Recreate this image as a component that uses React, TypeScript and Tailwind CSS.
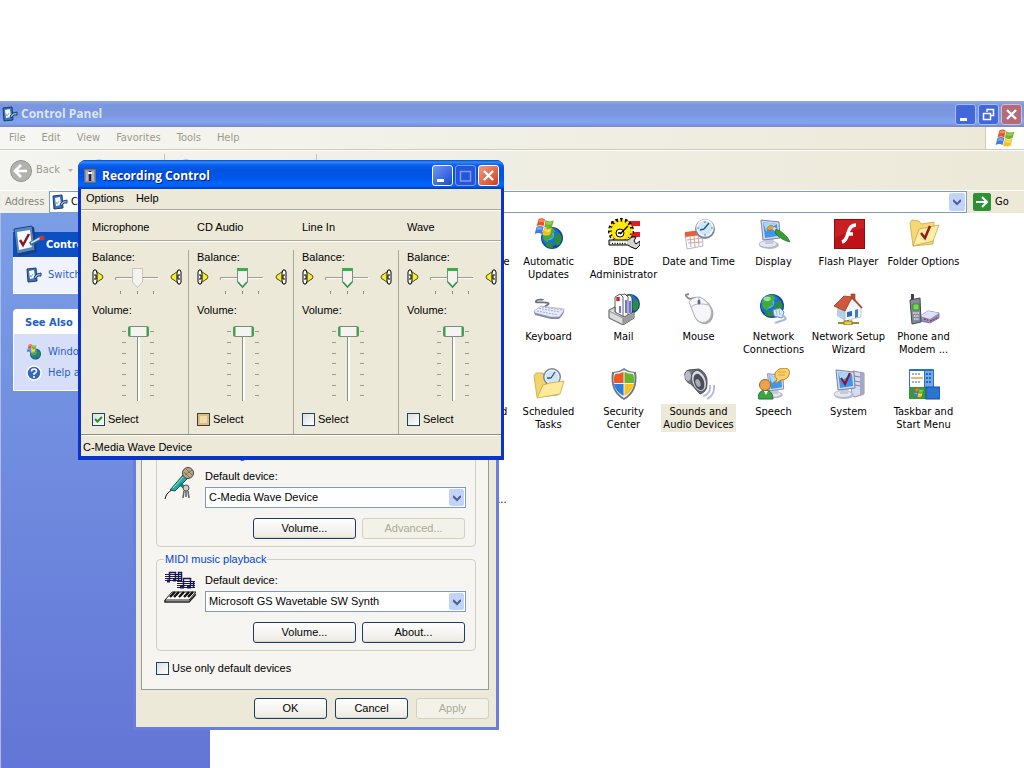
import { useState } from "react";
import type { ReactNode } from "react";
import clsx from "clsx";

/* ---------- Icons ---------- */

const Flag = () => (
  <>
    <path d="M7 2Q12 -1 17 2L15 13Q9 10 4 13Z" fill="#e8542a" />
    <path d="M8 3Q12 1 16 3L15 7Q11 5 7 7Z" fill="#f58a5e" />
    <path d="M18 3Q24 7 31 4L28 14Q22 17 16 14Z" fill="#6fb52c" />
    <path d="M19 5Q24 8 29 6L28 9Q23 12 18 9Z" fill="#94d04c" />
    <path d="M4 14Q9 11 15 14L12 25Q7 22 1 25Z" fill="#3f7be0" />
    <path d="M5 15Q9 13 13 15L12 19Q8 17 4 19Z" fill="#76a8f3" />
    <path d="M16 15Q22 18 28 15L25 26Q19 29 13 26Z" fill="#f8bd1c" />
    <path d="M17 17Q22 19 26 17L25 21Q20 23 16 20Z" fill="#fddc62" />
  </>
);

const Globe = ({ cx, cy, r }: { cx: number; cy: number; r: number }) => (
  <g transform={`translate(${cx} ${cy}) scale(${r / 10})`}>
    <circle r="10" fill="#10489e" />
    <circle cx="-1" cy="-1" r="8.5" fill="#1e6fd0" />
    <circle cx="-3" cy="-3" r="5" fill="#5aaaf0" />
    <path d="M-8-5Q-4-10 1-9L3-6L0-4L1-1L-3 1L-4 4L-8 1Z" fill="#3fae38" />
    <path d="M3-2L7-5L9 0L7 6L4 7L2 3Z" fill="#2b8f35" />
    <path d="M-5 5L0 4L1 9Q-3 9-6 7Z" fill="#2b8f35" />
    <ellipse cx="-4" cy="-6" rx="3" ry="2" fill="#c6f0c8" opacity="0.7" />
  </g>
);

const Monitor = () => (
  <>
    <ellipse cx="11" cy="27" rx="10" ry="4" fill="#b9bdcf" />
    <ellipse cx="10" cy="26" rx="9" ry="3.5" fill="#e4e6f0" stroke="#a0a5ba" strokeWidth="0.6" />
    <path d="M8 20L16 21L15 26L7 26Z" fill="#c5c9da" />
    <path d="M3 2L21 4L22 20L5 22Z" fill="#d6dbea" stroke="#7881a3" />
    <path d="M5 4L19 6L20 18L7 20Z" fill="#3f95ec" />
    <path d="M5 4L19 6L8 13Z" fill="#a6d6fb" />
  </>
);

const PanelIcon = ({ className }: { className: string }) => (
  <svg className={className} viewBox="0 0 32 32">
    <path d="M3 5L21 2L24 27L6 31Z" fill="#173f7a" />
    <path d="M1 4L19 1L22 25L4 29Z" fill="#5587c6" stroke="#1d4480" />
    <path d="M4 7L17 5L19 22L6 25Z" fill="#fbfdff" />
    <path d="M7 15L10 20L16 9" fill="none" stroke="#8d1521" strokeWidth="2.5" />
    <path d="M17 19L28 13" stroke="#35629c" strokeWidth="4" />
    <path d="M18 18L27 13" stroke="#c5ddf5" strokeWidth="2" />
    <circle cx="29" cy="13" r="2.5" fill="#c83a2b" />
  </svg>
);

// 16px variant with a thick pointer and no check mark
const SmallPanelIcon = () => (
  <svg className="size-4 shrink-0" viewBox="0 0 16 16">
    <path d="M1 2L10 1L11 14L2 15Z" fill="#3c74b8" stroke="#163c72" />
    <path d="M3 4L8 3L9 11L4 12Z" fill="#f6faff" />
    <path d="M4 8L5 10L7 7" fill="none" stroke="#8aa9b8" />
    <path d="M8 10L11 7L15 6V9L12 9L9 12Z" fill="#8fb7e2" stroke="#1b3f6f" />
  </svg>
);

const icons: Record<string, ReactNode> = {
  updates: (
    <>
      <Globe cx={19} cy={20} r={11} />
      <g transform="translate(1 0) scale(0.64)"><Flag /></g>
    </>
  ),
  bde: (
    <>
      <path d="M3 3H32V8H3ZM3 14H32V19H3Z" fill="#e01c24" />
      <circle cx="13" cy="13" r="11" fill="none" stroke="#000" strokeWidth="4" strokeDasharray="2.6 2" />
      <circle cx="13" cy="13" r="10" fill="#ffe815" stroke="#000" strokeWidth="0.8" />
      <circle cx="13" cy="13" r="10.500" fill="none" stroke="#ffe815" strokeWidth="2.6" strokeDasharray="2.6 1.6" />
      <circle cx="12" cy="15" r="4" fill="#fff" stroke="#000" />
      <path d="M12 16L20 8M10 15H14" stroke="#000" strokeWidth="1.3" />
      <path d="M1 22H20L24 19L28 19L26 23L28 26L32 23V27L28 31L23 29L20 27H1Z" fill="#d4d4d4" stroke="#000" />
      <path d="M3 24.5H19" stroke="#fff" strokeWidth="2" />
      <path d="M4 25.5H19" stroke="#000" strokeWidth="1.5" strokeDasharray="1 1.5" />
    </>
  ),
  date: (
    <>
      <path d="M2 15L19 13L20 28L4 31Z" fill="#fff" stroke="#b3b7cb" />
      <path d="M2 14L19 12V17L2 19Z" fill="#e2603a" />
      <path d="M4 22L19 20M5 25L19 24M7 18L8 29M11 18L12 29M15 17L16 28" stroke="#d3a79b" />
      <circle cx="22" cy="11" r="10" fill="#7d8799" />
      <circle cx="22" cy="10" r="8" fill="#cfe6f7" stroke="#f9fbff" strokeWidth="1.5" />
      <path d="M21 11L26 5M21 11L17 12" stroke="#29558c" strokeWidth="1.5" />
      <path d="M22 3V5M22 16V18M14 10H16M28 10H30" stroke="#587a9b" />
    </>
  ),
  display: (
    <>
      <Monitor />
      <path d="M9 10Q13 5 16 9Q14 13 9 12Z" fill="#e0a23c" stroke="#9c6a25" strokeWidth="0.6" />
      <path d="M15 10L20 13" stroke="#e6d9b8" strokeWidth="3" />
      <path d="M18 11Q28 15 32 24Q23 22 17 15Z" fill="#35a02f" stroke="#1c6824" strokeWidth="0.7" />
    </>
  ),
  flash: (
    <>
      <rect x="1" y="1" width="31" height="30" fill="#8a1010" />
      <rect x="2" y="2" width="29" height="28" fill="#be1217" />
      <path d="M2 2H31V10Q16 12 2 20Z" fill="#d02a28" opacity="0.6" />
      <path d="M23 7Q17 7 15 15Q13 23 9 24M15 16H20" fill="none" stroke="#fff" strokeWidth="3.5" />
    </>
  ),
  folderOptions: (
    <>
      <path d="M2 5L4 2L11 3L13 6L26 4L25 26L5 28Z" fill="#f5d878" stroke="#c9a548" strokeWidth="0.8" />
      <path d="M5 28L11 11L31 7L25 23Z" fill="#fdeea6" stroke="#c9a548" strokeWidth="0.8" />
      <path d="M13 15L17 20L22 8" fill="none" stroke="#951b1b" strokeWidth="2.5" />
    </>
  ),
  keyboard: (
    <>
      <path d="M14 15C8 13 18 12 15 10S1 11 3 8S10 8 10 6" fill="none" stroke="#6b7080" strokeWidth="1.8" />
      <path d="M1 19L8 14L31 17Q32 20 26 26L18 26L2 22Z" fill="#8588ae" />
      <path d="M1 18L8 13L31 16Q31 19 26 24L18 24L2 20Z" fill="#e9ebf8" stroke="#9699b8" strokeWidth="0.6" />
      <path d="M6 15.500L27 19M9 14L29 17M4 18L25 22" stroke="#a6abd6" strokeDasharray="2 1" />
    </>
  ),
  mail: (
    <>
      <Globe cx={22} cy={11} r={10} />
      <path d="M18 3L22 2L24 5V24H18Z" fill="#fff" stroke="#333" strokeWidth="0.8" />
      <path d="M13 2L17 1L20 4V24H13Z" fill="#fff" stroke="#333" strokeWidth="0.8" />
      <path d="M7 4L12 1L15 4V24L7 21Z" fill="#fff" stroke="#333" strokeWidth="0.8" />
      <path d="M10 4V8" stroke="#dc2030" strokeWidth="3.5" />
      <path d="M12 13V20M18 7V20M22 8V20" stroke="#3139d8" strokeWidth="1.4" />
      <path d="M1 17L7 14V19L16 24L26 19V25L15 32L1 25Z" fill="#dcdcdc" stroke="#555" />
      <path d="M15 25L26 20V25L15 31Z" fill="#9c9c9c" />
      <path d="M1 18L15 25V32" fill="none" stroke="#888" />
    </>
  ),
  mouse: (
    <>
      <path d="M15 6C12 2 8 8 5 5S1 2 6 1" fill="none" stroke="#888" strokeWidth="1.8" />
      <path d="M7 11Q10 5 19 5Q26 8 30 17Q32 27 24 31Q16 32 12 25Z" fill="#a9a9ab" />
      <path d="M6 9Q9 4 17 4Q25 8 28 16Q30 25 23 29Q16 31 12 24Z" fill="#f6f6f9" stroke="#b4b4b8" />
      <path d="M8 14Q13 9 26 12M16 4L16 11" fill="none" stroke="#b6b6bf" />
      <ellipse cx="16" cy="9" rx="1.5" ry="2.5" fill="#5964a0" />
    </>
  ),
  network: (
    <>
      <Globe cx={14} cy={13} r={12} />
      <path d="M15 17L22 15L26 19L24 25L16 23Z" fill="#d9eafa" stroke="#6d90b8" />
      <path d="M18 17L19 22M21 16L22 22" stroke="#9dbcdc" />
      <path d="M24 22Q30 26 26 27T17 30" fill="none" stroke="#a3bcd9" strokeWidth="2.2" />
    </>
  ),
  wizard: (
    <>
      <path d="M18 1H22V9H18Z" fill="#c74b31" stroke="#8b321f" strokeWidth="0.6" />
      <path d="M4 13L12 18V28L4 23Z" fill="#b6cfe8" />
      <path d="M12 17L19 6L28 15V24L12 28Z" fill="#f2f7fc" stroke="#9cb0c8" strokeWidth="0.6" />
      <path d="M1 13L11 3L19 4L12 18Z" fill="#d0583c" stroke="#963620" strokeWidth="0.8" />
      <path d="M19 4L29 15" stroke="#b64428" strokeWidth="1.8" />
      <path d="M14 19L19 18V23L14 24Z" fill="#2867ba" />
      <path d="M22 17L25 16V24L22 25Z" fill="#3f7cc9" />
      <path d="M5 30H26M15 27V30" stroke="#9e8a28" strokeWidth="2" />
      <rect x="11" y="28" width="8" height="4" fill="#e6cf50" stroke="#8d7920" />
    </>
  ),
  phone: (
    <>
      <path d="M12 23L20 18L31 20L31 25L22 30L12 28Z" fill="#8e93bd" stroke="#6a6f9c" strokeWidth="0.8" />
      <path d="M12 23L20 18L31 20L22 26Z" fill="#dfe2f4" />
      <path d="M16 26L20 27M22 28L29 25" stroke="#b03a48" strokeWidth="1.4" strokeDasharray="2 1" />
      <path d="M3 1H6V9H3Z" fill="#3c4050" />
      <path d="M2 7L12 5L13 29L4 31Z" fill="#868b99" stroke="#42464f" />
      <path d="M5 11H11V17H5Z" fill="#6be04a" stroke="#2a6a20" strokeWidth="0.6" />
      <path d="M5 20H11M6 23H11M6 26H11" stroke="#e6e8ee" strokeWidth="1.5" strokeDasharray="1.5 0.8" />
    </>
  ),
  tasks: (
    <>
      <path d="M1 8L3 5L10 5L12 8L24 8L25 27L4 29Z" fill="#f3d36c" stroke="#c9a548" strokeWidth="0.8" />
      <circle cx="19" cy="9" r="9" fill="#7d8799" />
      <circle cx="19" cy="9" r="7" fill="#cfe6f7" stroke="#fff" />
      <path d="M18 10L22 4M18 10L14 10" stroke="#29558c" strokeWidth="1.3" />
      <path d="M4 30L10 17L17 15L31 13L27 26Z" fill="#fdeb9c" stroke="#c9a548" strokeWidth="0.8" />
    </>
  ),
  security: (
    <>
      <path d="M16 0Q21 4 28 4Q31 24 16 32Q1 24 4 4Q11 4 16 0Z" fill="#6c7984" />
      <path d="M16 2Q21 5 26 5Q29 22 16 30Q3 22 6 5Q11 5 16 2Z" fill="#eef2f5" />
      <path d="M15.500 4V15H6Q5 10 7 6Q12 6 15.500 4Z" fill="#ec5a24" />
      <path d="M16.500 4V15H26Q27 10 25 6Q20 6 16.500 4Z" fill="#69b52c" />
      <path d="M15.500 16V28Q7 23 6 16Z" fill="#2e7de0" />
      <path d="M16.500 16V28Q25 23 26 16Z" fill="#f9c220" />
    </>
  ),
  sounds: (
    <>
      <path d="M20 28Q28 26 27 17M24 31Q32 27 31 17" fill="none" stroke="#b4b9da" strokeWidth="1.8" />
      <path d="M2 8Q1 3 6 2L16 1Q25 5 24 16Q24 24 17 26L8 16Q2 14 2 8Z" fill="#74767f" stroke="#4c4e58" />
      <ellipse cx="5" cy="8" rx="3" ry="5" fill="#b9bcc6" />
      <ellipse cx="16" cy="13" rx="7" ry="11" transform="rotate(-20 16 13)" fill="#d9dbe3" stroke="#54565e" />
      <ellipse cx="16" cy="14" rx="5" ry="8.500" transform="rotate(-20 16 14)" fill="#4b4d57" />
      <ellipse cx="15" cy="15" rx="2.4" ry="4" transform="rotate(-20 15 15)" fill="#a9acb6" />
    </>
  ),
  speech: (
    <>
      <g transform="translate(7 4) scale(0.85)"><Monitor /></g>
      <path d="M17 5Q20 0 27 0Q33 1 31 7Q29 12 23 12L17 16L19 11Q16 9 17 5Z" fill="#fbd269" stroke="#ba812b" />
      <path d="M20 4H28M20 7H27" stroke="#dd9e3c" />
      <path d="M0 29Q1 22 8 22Q15 23 15 31H1Z" fill="#3ca548" stroke="#20702b" />
      <path d="M6 23L8 27L10 23Z" fill="#fff" />
      <circle cx="7" cy="17" r="5.5" fill="#eea34a" stroke="#a1642a" />
    </>
  ),
  system: (
    <>
      <path d="M20 3L31 5V26L22 29L18 27Z" fill="#d6daea" stroke="#8d94b4" />
      <path d="M27 5L31 5V26L27 28Z" fill="#a3a9c4" />
      <path d="M21 8L27 9M22 13L27 14M22 17L27 18" stroke="#7780a8" />
      <Monitor />
      <path d="M8 10L12 16L17 5" fill="none" stroke="#8f1526" strokeWidth="2.2" />
    </>
  ),
  taskbar: (
    <>
      <rect x="1" y="1" width="25" height="19" rx="1" fill="#2970c0" />
      <rect x="2" y="3" width="14" height="16" fill="#fff" />
      <rect x="17" y="3" width="8" height="16" fill="#6fabe8" />
      <path d="M4 6H13M4 14H13" stroke="#7a9cc8" strokeWidth="1.4" strokeDasharray="2 1" />
      <path d="M3 10H15" stroke="#f19b3a" strokeWidth="1.5" />
      <path d="M18 6H23M18 10H23M18 14H23" stroke="#1a5098" strokeWidth="1.4" strokeDasharray="2 1" />
      <rect x="1" y="19" width="17" height="12" fill="#38963b" />
      <rect x="18" y="19" width="14" height="12" fill="#2a74d4" stroke="#194f9d" />
      <g transform="translate(5 20) scale(0.34)"><Flag /></g>
    </>
  ),
};

const Chevron = () => (
  <svg className="size-2" viewBox="0 0 8 8" fill="none" stroke="#4d6185" strokeWidth="2">
    <path d="M0 2L4 6L8 2" />
  </svg>
);

const Speaker = ({ flip }: { flip?: boolean }) => (
  <svg className={clsx("w-3 h-[18px]", flip && "-scale-x-100")} viewBox="0 0 12 18">
    <path d="M4 3L8 6L10 7L11 9L10 11L8 12L4 15Z" fill="#f4ee35" stroke="#55500a" />
    <path d="M1 4L2 2H4L5 5V13L4 16H2L1 14Z" fill="#fff" stroke="#000" />
    <path d="M2 7H4V11H2" fill="none" stroke="#000" />
  </svg>
);

const MicIcon = () => (
  <svg className="size-8" viewBox="0 0 32 32">
    <path d="M1 32Q2 26 8 23" fill="none" stroke="#111" />
    <path d="M6 23L19 8L23 12L11 24Z" fill="#28a8a0" stroke="#0d5a5c" />
    <path d="M9 21L20 9" stroke="#8fe8e0" />
    <circle cx="24" cy="6" r="5.5" fill="#b9a98a" stroke="#4d4538" />
    <path d="M20 5L26 11M22 2L28 8M21 8L28 3" stroke="#716650" strokeWidth="0.8" />
    <path d="M16 17L21 21" stroke="#0d7a7c" strokeWidth="3" />
    <circle cx="22" cy="21" r="3" fill="#ccc" stroke="#555" />
    <path d="M20 24L19 31M24 24L25 31M22 24V30" stroke="#666" strokeWidth="1.6" />
  </svg>
);

const MidiIcon = () => (
  <svg className="size-8" viewBox="0 0 32 32">
    <path d="M1 3.500H18M1 5.500H18M1 7.500H18M1 9.500H18M13 10.500H31M13 12.500H31M13 14.500H31M13 16.500H31" stroke="#222" />
    <path d="M5.500 10V1.500H11.500V9M14.500 9V1.500H17.500V9M19.500 16V7.500H26.500V15M29.500 10V16" fill="none" stroke="#17176d" strokeWidth="1.5" />
    <path d="M3 10H6M9 9H12M16 16H20M23 16H27" stroke="#17176d" strokeWidth="3" />
    <path d="M8 21H32L25 29H1Z" fill="#fff" stroke="#222" />
    <path d="M11 21L6 26M15 21L10 26M20 21L15 26M25 21L20 26M29 21L24 26" stroke="#111" strokeWidth="2.4" />
    <path d="M1 29V31H25L32 23" fill="none" stroke="#222" strokeWidth="1.5" />
  </svg>
);

/* ---------- Shared controls ---------- */

type CaptionKind = "min" | "max" | "restore" | "close";

const glyphs: Record<CaptionKind, ReactNode> = {
  min: <path d="M4 14.5H11" strokeWidth="3" />,
  max: <path d="M4 5.5H15M4.5 5V15H14.5V5" strokeWidth="1.5" />,
  restore: <path d="M4.5 8V14.5H11.5V8.5H4M8 7V4.5H14.5V10.5H12M4 8.5H12M8 4.5H15" strokeWidth="1.5" />,
  close: <path d="M5 5L14 14M14 5L5 14" strokeWidth="2.4" />,
};

const CaptionButton = ({ kind, className }: { kind: CaptionKind; className: string }) => (
  <button aria-label={kind} className={clsx("size-[21px] rounded-[3px] border flex items-center justify-center", className)}>
    <svg className="size-[19px]" viewBox="0 0 19 19" fill="none" stroke="currentColor">{glyphs[kind]}</svg>
  </button>
);

const PushButton = ({ children, disabled, className }: { children: ReactNode; disabled?: boolean; className: string }) => (
  <button
    disabled={disabled}
    className={clsx(
      "h-[21px] rounded-[3px] border text-center",
      disabled ? "border-[#d3d0c0] bg-[#f3f2e8] text-[#aba899]" : "border-[#1b3e6b] bg-linear-to-b from-white to-[#eceae2] shadow-[inset_0_-1px_0_#d8d5ca]",
      className,
    )}
  >
    {children}
  </button>
);

const CheckBox = ({ label, checked, hot }: { label: string; checked?: boolean; hot?: boolean }) => {
  const [on, setOn] = useState(!!checked);
  return (
    <label className="flex items-center gap-[3px] leading-[14px]">
      <span className="relative size-[13px]">
        <input
          type="checkbox"
          checked={on}
          onChange={() => setOn(!on)}
          className={clsx(
            "block size-[13px] appearance-none border border-[#1c4468]",
            hot ? "bg-[#e9dcb8] shadow-[inset_0_0_0_2px_#f6b755]" : "bg-linear-to-br from-[#dcdfdb] to-white",
          )}
        />
        {on && (
          <svg className="absolute inset-0 pointer-events-none" viewBox="0 0 13 13" fill="none" stroke="#289128" strokeWidth="2">
            <path d="M3 6L5.5 8.5L10 4" />
          </svg>
        )}
      </span>
      {label}
    </label>
  );
};

/* ---------- Recording Control ---------- */

const BalanceSlider = ({ label, disabled }: { label: string; disabled?: boolean }) => {
  const [value, setValue] = useState(50);
  const x = 5 + (value / 100) * 32;
  return (
    <div className="relative">
      <svg className="w-12 h-7" viewBox="0 0 48 28">
        <path d="M2.500 12V9.500H45" fill="none" stroke="#9d9c90" />
        <path d="M3 10.5H46" stroke="#fff" />
        <path d="M7.5 23V26M24.5 23V26M40.5 23V26" stroke="#8f8e82" />
        <g transform={`translate(${x - 2} 0)`}>
          <path d="M0.5 0.5H10.5V14L5.5 19.5L0.5 14Z" fill="#f4f3ee" stroke={disabled ? "#c8c6b8" : "#7c8f86"} />
          {!disabled && <path d="M0 0H11V3H0Z" fill="#3bae4b" />}
          {!disabled && <path d="M1 14L5.5 19L10 14" fill="none" stroke="#3c9650" strokeWidth="1.6" />}
        </g>
      </svg>
      <input
        type="range"
        aria-label={label}
        value={value}
        disabled={disabled}
        onChange={(e) => setValue(Number(e.target.value))}
        className="absolute inset-0 size-full opacity-0"
      />
    </div>
  );
};

const VolumeSlider = ({ label }: { label: string }) => {
  const [value, setValue] = useState(100);
  const y = 4 + (1 - value / 100) * 64;
  return (
    <div className="relative mx-auto">
      <svg className="w-12 h-20" viewBox="0 0 48 80">
        <path d="M24.5 9V79" stroke="#8f8e86" />
        <path d="M26 9V79" stroke="#fff" strokeWidth="2" />
        {[9, 20, 31, 41, 52, 63, 73].map((t) => (
          <path key={t} d={`M9 ${t + 0.5}H13M37 ${t + 0.5}H41`} stroke="#9a998c" />
        ))}
        <g transform={`translate(15 ${y})`}>
          <rect x="0.5" y="0.5" width="20" height="10" rx="1" fill="#f5f4f0" stroke="#7c8b84" />
          <path d="M1.500 1V10M19.500 1V10" stroke="#35a54a" strokeWidth="2" />
        </g>
      </svg>
      <input
        type="range"
        aria-label={label}
        value={value}
        onChange={(e) => setValue(Number(e.target.value))}
        className="absolute inset-0 size-full opacity-0 [writing-mode:vertical-lr] [direction:rtl]"
      />
    </div>
  );
};

const channels = [
  { name: "Microphone", checked: true, mono: true },
  { name: "CD Audio", hot: true },
  { name: "Line In" },
  { name: "Wave" },
];

const RecordingControl = () => (
  <section className="absolute left-[78px] top-[160px] w-[426px] rounded-t-lg bg-[#0a33c8] pb-1 overflow-hidden">
    <header className="flex items-center h-[29px] pt-[2px] pl-[6px] pr-[5px] bg-[linear-gradient(to_bottom,#0a45c4_0,#2f8cff_2px,#0a5fee_5px,#0054e0_10px,#0055e8_18px,#0066ff_24px,#0060f4_26px,#0038b8_29px)]">
      <svg className="w-3 h-4" viewBox="0 0 12 16">
        <path d="M0 1H12V15H0Z" fill="#8b8f9e" stroke="#4d5064" />
        <path d="M3 3V13M9 3V13" stroke="#d8dae4" />
        <path d="M6 3V13" stroke="#20243c" strokeWidth="2" />
        <path d="M4 5H8" stroke="#fff" strokeWidth="2" />
      </svg>
      <h2 className="ml-[6px] flex-1 font-['Open_Sans',sans-serif] text-[12px] font-bold text-white [text-shadow:1px_1px_0_#0a1883]">Recording Control</h2>
      <div className="flex gap-[2px]">
        <CaptionButton kind="min" className="border-white bg-linear-to-br from-[#6f96f5] to-[#1a48d0] text-white" />
        <CaptionButton kind="max" className="border-[#7b9df5] bg-[#2456dc] text-[#7f9cf0]" />
        <CaptionButton kind="close" className="border-white bg-linear-to-br from-[#f09a7c] to-[#d03a12] text-white" />
      </div>
    </header>
    <div className="mx-[3px] bg-[#ece9d8]">
      <nav className="flex gap-3 h-[21px] px-[5px] items-center border-b border-[#aca899] pb-px">
        <button>Options</button>
        <button>Help</button>
      </nav>
      <div className="border-t border-white pt-[9px]">
        <div className="ml-[11px] grid grid-cols-[105px_105px_105px_1fr] h-[21px] border-b border-[#aca899] leading-[14px] shadow-[0_1px_0_#fff]">
          {channels.map((c) => <span key={c.name}>{c.name}</span>)}
        </div>
        <div className="mt-[9px] pl-[3px] grid grid-cols-[105px_105px_105px_1fr] leading-[14px]">
          {channels.map((c) => (
            <div key={c.name} className="pl-2 pb-2 border-r border-[#aca899] last:border-r-0">
              <p>Balance:</p>
              <div className="flex w-[90px] justify-between items-start pt-1">
                <Speaker />
                <BalanceSlider label={`${c.name} balance`} disabled={c.mono} />
                <Speaker flip />
              </div>
              <p className="mt-[7px]">Volume:</p>
              <div className="mt-[5px] mb-[10px] flex w-[90px]">
                <VolumeSlider label={`${c.name} volume`} />
              </div>
              <CheckBox label="Select" checked={c.checked} hot={c.hot} />
            </div>
          ))}
        </div>
      </div>
      <footer className="border-t border-[#8f8d80] h-[22px] flex items-center px-[2px] pt-[3px] shadow-[inset_0_1px_0_#fff]">C-Media Wave Device</footer>
    </div>
  </section>
);

/* ---------- Sounds and Audio Devices ---------- */

type DeviceGroupProps = { id: string; legend: string; icon: ReactNode; device: string; second: string; disabled?: boolean };

const DeviceGroup = ({ id, legend, icon, device, second, disabled }: DeviceGroupProps) => (
  <fieldset className="border border-[#d0d0bf] rounded-[4px] pr-[9px] pb-[7px] pl-[7px]">
    <legend className="px-px text-[#0046d5] leading-[13px]">{legend}</legend>
    <div className="flex gap-[9px] pt-[5px]">
      {icon}
      <div className="flex-1">
        <label htmlFor={id} className="block leading-[14px] mt-[2px]">Default device:</label>
        <div className="relative mt-1">
          <select id={id} className="block w-full h-[21px] appearance-none border border-[#7f9db9] bg-white pl-[3px]">
            <option>{device}</option>
          </select>
          <span className="absolute right-[2px] inset-y-[2px] w-[15px] flex items-center justify-center rounded-[2px] bg-[#c2d3fb] pointer-events-none"><Chevron /></span>
        </div>
        <div className="flex justify-end gap-[6px] mt-[10px] pr-px">
          <PushButton className="w-[103px]">Volume...</PushButton>
          <PushButton className="w-[103px]" disabled={disabled}>{second}</PushButton>
        </div>
      </div>
    </div>
  </fieldset>
);

const SoundDialog = () => (
  <section className="absolute left-[133px] top-[430px] w-[366px] border-3 border-t-0 border-[#6a7fdb] bg-[#ece9d8] pl-[5px] pr-[7px] pt-2 pb-2">
    <div className="border border-[#919b9c] bg-[#f6f5f1] pl-[14px] pr-3 pt-[10px] pb-[14px] flex flex-col gap-[6px]">
      <DeviceGroup id="recording" legend="Sound recording" icon={<MicIcon />} device="C-Media Wave Device" second="Advanced..." disabled />
      <DeviceGroup id="midi" legend="MIDI music playback" icon={<MidiIcon />} device="Microsoft GS Wavetable SW Synth" second="About..." />
      <div className="mt-1">
        <CheckBox label="Use only default devices" />
      </div>
    </div>
    <div className="flex justify-end gap-2 mt-2">
      <PushButton className="w-[73px]">OK</PushButton>
      <PushButton className="w-[73px]">Cancel</PushButton>
      <PushButton className="w-[73px]" disabled>Apply</PushButton>
    </div>
  </section>
);

/* ---------- Control Panel ---------- */

type Item = { label: string; icon?: string; first?: boolean; selected?: boolean };

const items: Item[] = [
  { label: "Administrative Tools", first: true },
  { label: "Automatic Updates", icon: "updates" },
  { label: "BDE Administrator", icon: "bde" },
  { label: "Date and Time", icon: "date" },
  { label: "Display", icon: "display" },
  { label: "Flash Player", icon: "flash" },
  { label: "Folder Options", icon: "folderOptions" },
  { label: "Java", first: true },
  { label: "Keyboard", icon: "keyboard" },
  { label: "Mail", icon: "mail" },
  { label: "Mouse", icon: "mouse" },
  { label: "Network Connections", icon: "network" },
  { label: "Network Setup Wizard", icon: "wizard" },
  { label: "Phone and Modem ...", icon: "phone" },
  { label: "Scanners and Cameras", first: true },
  { label: "Scheduled Tasks", icon: "tasks" },
  { label: "Security Center", icon: "security" },
  { label: "Sounds and Audio Devices", icon: "sounds", selected: true },
  { label: "Speech", icon: "speech" },
  { label: "System", icon: "system" },
  { label: "Taskbar and Start Menu", icon: "taskbar" },
  { label: "Wireless Network Se...", first: true },
];

const ControlPanel = () => (
  <main className="flex-1 flex flex-col font-['DejaVu_Sans_Condensed','DejaVu_Sans',sans-serif]">
    <header className="flex items-center h-[26px] pl-[2px] pr-[2px] bg-[linear-gradient(to_bottom,#93abe3_0,#7a96df_4px,#7a97e0_14px,#82a5f0_21px,#7f9ce6_23px,#7388cb_26px)]">
      <SmallPanelIcon />
      <h1 className="ml-[3px] flex-1 font-['Open_Sans',sans-serif] text-[12px] font-bold text-[#dbe5fb]">Control Panel</h1>
      <div className="flex gap-[2px]">
        <CaptionButton kind="min" className="border-[#a9bdf2] bg-[#4269dc] text-white" />
        <CaptionButton kind="restore" className="border-[#a9bdf2] bg-[#4269dc] text-white" />
        <CaptionButton kind="close" className="border-[#d5bdd2] bg-[#b56a78] text-white" />
      </div>
    </header>

    {/* Menu bar */}
    <div className="flex h-[23px] border-b border-[#cfccbc] bg-linear-to-r from-[#f6f6f3] to-[#ece9d8]">
      <nav className="flex flex-1 items-center gap-4 pl-[9px] text-[#9b9a8e]">
        {["File", "Edit", "View", "Favorites", "Tools", "Help"].map((m) => <button key={m}>{m}</button>)}
      </nav>
      <div className="w-[39px] bg-white border-l border-[#cfccbc] flex items-center justify-center">
        <svg className="size-5" viewBox="0 0 32 28"><Flag /></svg>
      </div>
    </div>

    {/* Toolbar */}
    <div className="flex items-center h-[40px] pl-[10px] border-t border-white bg-linear-to-r from-[#f4f4f0] to-[#ece9d8] text-[#9b9a8e]">
      <button className="flex items-center gap-1">
        <svg className="size-[22px]" viewBox="0 0 22 22">
          <circle cx="11" cy="11" r="10.5" fill="#b2b2ae" stroke="#92928e" />
          <path d="M17 11H6M11 5L5 11L11 17" fill="none" stroke="#fff" strokeWidth="2.6" />
        </svg>
        Back
      </button>
      <svg className="ml-2 w-[5px] h-[3px]" viewBox="0 0 5 3"><path d="M0 0H5L2.5 3Z" fill="#b5b4a8" /></svg>
      <svg className="ml-[14px] size-6" viewBox="0 0 24 24"><circle cx="12" cy="12" r="11.5" fill="#9fabc4" /></svg>
      <span className="ml-[53px] h-[34px] w-px bg-[#c5c2b2]" />
      <svg className="ml-[9px] size-6" viewBox="0 0 24 24"><circle cx="12" cy="12" r="11.5" fill="#7e90bd" /></svg>
      <span className="ml-[118px] h-[34px] w-px bg-[#c5c2b2]" />
    </div>

    {/* Address bar */}
    <div className="flex items-center h-[23px] border-t border-white bg-linear-to-r from-[#f0efe8] to-[#ece9d8] pl-[5px]">
      <label htmlFor="address" className="w-11 text-[#85847a]">Address</label>
      <div className="flex-1 flex items-center h-[22px] border border-[#7f9db9] bg-white pl-[2px] pr-[1px]">
        <SmallPanelIcon />
        <input id="address" defaultValue="Control Panel" className="ml-[3px] flex-1 min-w-0 outline-none" />
        <button aria-label="Open address list" className="w-4 h-[18px] flex items-center justify-center rounded-[2px] bg-[#c2d3fb]"><Chevron /></button>
      </div>
      <button className="flex items-center gap-1 pl-[6px] w-[57px]">
        <svg className="size-[18px]" viewBox="0 0 18 18">
          <rect width="18" height="18" rx="2" fill="#2f9134" />
          <path d="M3 9H14M9 4L14 9L9 14" fill="none" stroke="#fff" strokeWidth="2" />
        </svg>
        Go
      </button>
    </div>

    <div className="flex flex-1">
      <aside className="w-[210px] border-l border-[#aebbe8] bg-linear-to-b from-[#7b9ee6] to-[#6375d6] pl-3 pr-3 pt-[19px] text-[#2b5fc0]">
        <div>
          <div className="relative flex items-center h-[25px] pl-[33px] pt-[2px] bg-[#0c4fc0] rounded-tr-[4px] font-bold text-white">
            <PanelIcon className="absolute left-0 bottom-0 size-8" />
            Control Panel
          </div>
          <div className="h-[37px] border border-t-0 border-white bg-[#f0f3fd] pl-3 flex items-center gap-[6px]">
            <SmallPanelIcon />
            <a href="#category">Switch to Category View</a>
          </div>
        </div>
        <div className="mt-[15px]">
          <h3 className="h-[25px] leading-[28px] pl-3 bg-white rounded-t-[4px] font-bold text-[#215dc6]">See Also</h3>
          <div className="h-[57px] border border-t-0 border-white bg-[#d6dff7] pl-3 pt-[10px] flex flex-col gap-1">
            <a href="#update" className="flex items-center gap-[6px]">
              <svg className="size-4" viewBox="0 0 32 32">{icons.updates}</svg>
              Windows Update
            </a>
            <a href="#help" className="flex items-center gap-[6px]">
              <svg className="size-4" viewBox="0 0 16 16">
                <circle cx="8" cy="8" r="7" fill="#3466c4" stroke="#fff" strokeWidth="1.5" />
                <path d="M5.5 6.5Q5.5 4 8 4T10.500 6.500Q10.500 7.500 8 8.500V10M8 11V13" fill="none" stroke="#fff" strokeWidth="1.6" />
              </svg>
              Help and Support
            </a>
          </div>
        </div>
      </aside>
      <ul className="flex-1 bg-white pl-px pt-[5px] grid grid-cols-[repeat(auto-fill,75px)] auto-rows-[75px] content-start leading-[13px] text-center">
        {items.map((it) => (
          <li key={it.label} className={clsx("flex flex-col items-center gap-1", it.first && "col-start-4")}>
            <svg className="size-8 shrink-0" viewBox="0 0 32 32">{it.icon && icons[it.icon]}</svg>
            <span className={clsx("py-px", it.selected && "bg-[#ece9d8]")}>{it.label}</span>
          </li>
        ))}
      </ul>
    </div>
  </main>
);

export default function App() {
  return (
    <div className="relative min-h-screen flex flex-col overflow-hidden bg-white pt-[101px] font-['Liberation_Sans',Arial,sans-serif] text-[11px] text-black">
      <ControlPanel />
      <SoundDialog />
      <RecordingControl />
    </div>
  );
}
